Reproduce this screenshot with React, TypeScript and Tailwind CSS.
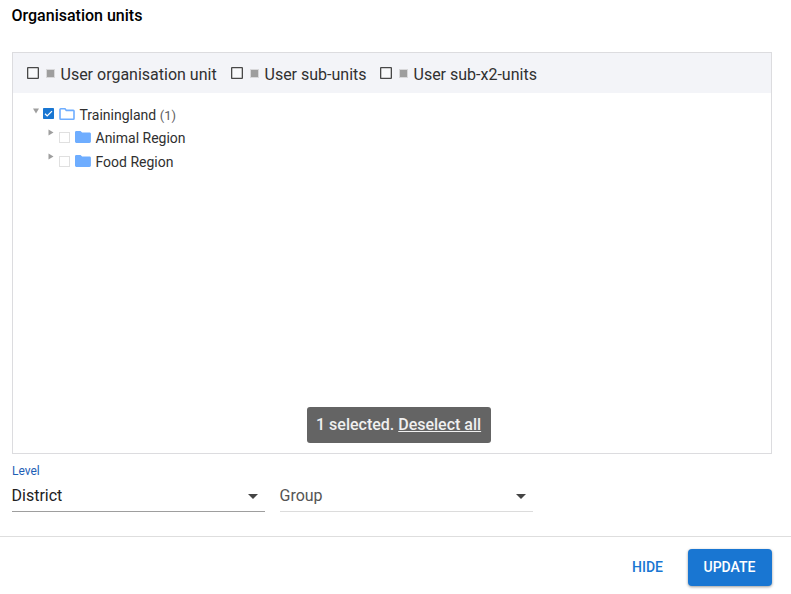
import React from "react";

type LevelOption = { label: string; box: string; text: string };

const userOptions: LevelOption[] = [
  { label: "User organisation unit", box: "w-[204px]", text: "w-[156px]" },
  { label: "User sub-units", box: "w-[149px]", text: "w-[103px]" },
  { label: "User sub-x2-units", box: "w-[160px]", text: "w-[124px]" },
];

function UserOption({ label, box, text }: LevelOption) {
  return (
    <label className={`flex h-10 shrink-0 items-start ${box}`}>
      <svg className="mt-[14px] size-3 shrink-0" viewBox="0 0 12 12">
        <rect x=".65" y=".65" width="10.7" height="10.7" rx=".4" fill="#f8f9fb" stroke="#484848" strokeWidth="1.3" />
      </svg>
      <span className="mt-4 ml-[7px] size-[9px] shrink-0 border border-[#d8d8da] bg-[#9e9e9e] bg-clip-padding" />
      <span className={`mt-[10px] ml-[5.5px] text-base leading-6 whitespace-nowrap ${text}`}>{label}</span>
    </label>
  );
}

function Folder({ open = false }: { open?: boolean }) {
  return (
    <svg className="h-3 w-4 shrink-0" viewBox="0 0 16 12">
      {open ? (
        <path
          d="M1 1.5a.7.7 0 0 1 .7-.7H6l1.3 1.6h7a.7.7 0 0 1 .7.7v7.4a.7.7 0 0 1-.7.7H1.7a.7.7 0 0 1-.7-.7z"
          fill="#fff"
          stroke="#6eadff"
          strokeWidth="1.6"
        />
      ) : (
        <path d="M0 1.3C0 .6.6 0 1.3 0h4.2l1.6 1.5h7.4c.8 0 1.4.6 1.4 1.3v7.8c0 .8-.6 1.4-1.4 1.4H1.3C.6 12 0 11.4 0 10.6z" fill="#6eadff" />
      )}
    </svg>
  );
}

function Region({ name }: { name: string }) {
  return (
    <div className="flex h-6 items-start pl-[35px]">
      <svg className="mt-[3px] h-[7px] w-[6px] shrink-0" viewBox="0 0 6 7">
        <path d="M.5.5v6l5-3z" fill="#9e9e9e" />
      </svg>
      <span className="mt-[6px] ml-[5px] size-[11px] shrink-0 border border-[#e0e0e0]" />
      <span className="mt-[5px] ml-[5px] flex">
        <Folder />
      </span>
      <span className="mt-[2px] ml-[4.5px] text-sm leading-5 text-[#303030]">{name}</span>
    </div>
  );
}

function Select({ label, value, active = false }: { label?: string; value: string; active?: boolean }) {
  return (
    <div className="w-[253px]">
      <div className="h-4 text-xs leading-4 text-[#1e5eb5]">{label}</div>
      <div className={`flex h-[33px] items-start justify-between border-b ${active ? "border-[#9e9e9e]" : "border-[#dcdcdc]"}`}>
        <span className={`mt-[5px] -ml-[0.5px] text-base leading-6 ${active ? "text-[#212121]" : "text-[#555]"}`}>{value}</span>
        <svg className="mt-[15px] mr-[7px] h-[5px] w-[10px]" viewBox="0 0 10 5">
          <path d="M0 0h10L5 5z" fill="#444" />
        </svg>
      </div>
    </div>
  );
}

export default function App() {
  return (
    <main className="flex h-[594px] w-[791px] flex-col overflow-hidden bg-white font-[Roboto,sans-serif] text-[#303030]">
      <h1 className="mt-1 ml-[11.5px] h-12 text-base leading-6 font-medium text-black">Organisation units</h1>
      <section className="ml-3 flex h-[402px] w-[760px] shrink-0 flex-col border border-[#dcdcdf]">
        <div className="flex h-10 shrink-0 bg-[#f3f4f8] pl-[14px]">
          {userOptions.map((option) => (
            <UserOption key={option.label} {...option} />
          ))}
        </div>
        <div className="pt-[10px]">
          <div className="flex h-[23px] items-start pl-5">
            <svg className="mt-[5px] h-[6px] w-[6px] shrink-0" viewBox="0 0 6 6">
              <path d="M0 .5h6L3 5.5z" fill="#9e9e9e" />
            </svg>
            <svg className="mt-[5px] ml-1 size-[11px] shrink-0" viewBox="0 0 11 11">
              <rect width="11" height="11" rx=".7" fill="#1976d2" />
              <path d="m2 5.7 2.2 2.2L9 3.1" fill="none" stroke="white" strokeWidth="1.3" />
            </svg>
            <span className="mt-[5px] ml-[5px] flex">
              <Folder open />
            </span>
            <span className="mt-[2px] ml-[4.5px] text-sm leading-5">
              Trainingland <span className="text-[13px] text-[#606060]">(1)</span>
            </span>
          </div>
          <Region name="Animal Region" />
          <Region name="Food Region" />
        </div>
        <div className="mt-auto mb-[10px] ml-[294px] h-9 w-[184px] rounded-[3px] bg-[#646464] pl-[9px] text-base leading-[35px] font-medium whitespace-nowrap text-[#f0f0f0]">
          1 selected. <a className="underline">Deselect all</a>
        </div>
      </section>
      <div className="mt-[9px] ml-3 flex h-[73px] shrink-0 gap-[15px]">
        <Select label="Level" value="District" active />
        <Select value="Group" />
      </div>
      <footer className="flex h-[58px] shrink-0 items-start justify-end border-t border-[#dedede] pt-3 pr-[19px] text-sm font-medium">
        <button className="mr-[25px] h-[37px] pb-px text-[#1976d2]">HIDE</button>
        <button className="h-[37px] w-[84px] rounded bg-[#1976d2] pr-px pb-px text-white shadow-[0_1px_3px_rgba(0,0,0,0.4)]">UPDATE</button>
      </footer>
    </main>
  );
}
